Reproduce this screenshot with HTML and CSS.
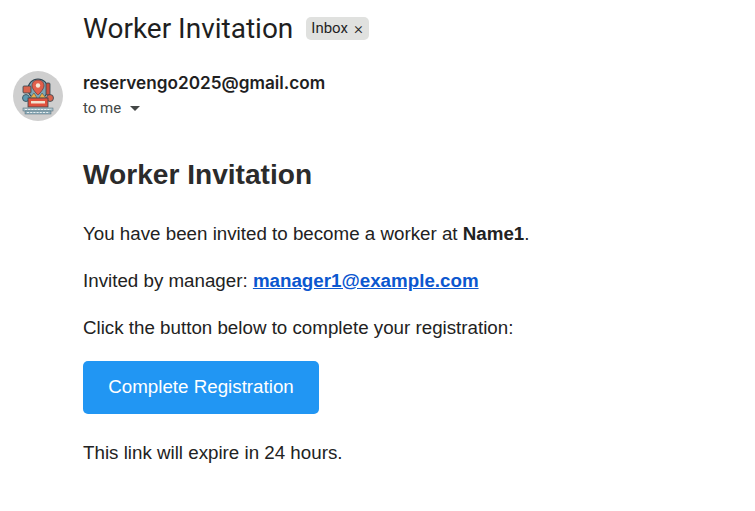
FILE: index.html
```html
<!DOCTYPE html>
<html lang="en">
<head>
<meta charset="utf-8">
<title>Worker Invitation</title>
<link rel="stylesheet" href="styles.css">
</head>
<body>
<div class="subject-row">
  <h1 class="subject">Worker Invitation</h1>
  <span class="chip">Inbox <span class="chip-x">×</span></span>
</div>
<div class="sender-row">
  <svg class="avatar" viewBox="0 0 50 50" width="50" height="50" aria-hidden="true">
    <circle cx="25" cy="25" r="25" fill="#cfcfcf"/>
    <circle cx="25" cy="18" r="10" fill="#7fa6b5" stroke="#2f4652" stroke-width="1.200"/>
    <rect x="10" y="15" width="8" height="7" rx="1" fill="#d9634c" stroke="#2f4652" stroke-width=".8"/>
    <rect x="33" y="12" width="4" height="12" rx="1" fill="#c9503f" stroke="#2f4652" stroke-width=".8"/>
    <circle cx="13" cy="27" r="3.500" fill="#5f9ab0" stroke="#2f4652" stroke-width=".8"/>
    <circle cx="37" cy="27" r="3.500" fill="#d9634c" stroke="#2f4652" stroke-width=".8"/>
    <path d="M25 9c-4 0-6 2.700-6 5.800 0 3.700 6 9.200 6 9.200s6-5.500 6-9.200c0-3.100-2-5.800-6-5.800z" fill="#e2604c" stroke="#6d3a38" stroke-width=".8"/>
    <circle cx="25" cy="14.500" r="2.200" fill="#f6ead8"/>
    <path d="M17 27l4-5 3 5zM26 27l3-5 4 5z" fill="#eeb04a" stroke="#39464f" stroke-width=".5"/>
    <rect x="15" y="27" width="20" height="9" fill="#e0513e" stroke="#39464f" stroke-width=".8"/>
    <rect x="18" y="30" width="14" height="2.500" fill="#f3e2cf"/>
    <rect x="10" y="37" width="30" height="3" fill="#a9c3cd" stroke="#4b6370" stroke-width=".5"/>
    <rect x="12" y="40" width="26" height="3" fill="#8fb0bd" stroke="#4b6370" stroke-width=".5"/>
    <path d="M12 38.500h26M14 41.500h22" stroke="#f0f4f5" stroke-width=".9" stroke-dasharray="2 1.200"/>
  </svg>
  <div class="sender-info">
    <div class="sender">reservengo2025@gmail.com</div>
    <div class="recipient">to me <svg class="caret" viewBox="0 0 10 5" width="10" height="5" aria-hidden="true"><path d="M0 0h10L5 5z" fill="#444746"/></svg></div>
  </div>
</div>
<main class="message">
  <h2 class="message-title">Worker Invitation</h2>
  <p class="line">You have been invited to become a worker at <strong>Name1</strong>.</p>
  <p class="line">Invited by manager: <a class="mail-link" href="#">manager1@example.com</a></p>
  <p class="line">Click the button below to complete your registration:</p>
  <a class="cta" href="#">Complete Registration</a>
  <p class="line">This link will expire in 24 hours.</p>
</main>
</body>
</html>
```

FILE: styles.css
```css
* { box-sizing: border-box; }
html, body { margin: 0; height: 100%; background: #fff; overflow: hidden; }
body { font-family: "Liberation Sans", Arial, sans-serif; color: #222; }
.subject-row { display: flex; align-items: center; gap: 13px; height: 56px; padding-left: 83px; }
.subject { margin: 2px 0 0; font: 400 28px/36px Roboto, sans-serif; color: #1f1f1f; }
.chip { display: flex; align-items: center; gap: 6px; height: 23px; padding: 0 6px 0 5px; border-radius: 5px; background: #e0e1df; font: 400 15px/23px Roboto, sans-serif; color: #1f1f1f; }
.chip-x { font-size: 17px; font-weight: 300; }
.sender-row { display: flex; gap: 20px; padding: 15px 0 0 13px; }
.avatar { flex: none; }
.sender-info { display: flex; flex-direction: column; gap: 3px; }
.sender { font: 600 17.200px/24px Inter, sans-serif; color: #1f1f1f; }
.recipient { display: flex; align-items: center; gap: 9px; font: 400 15px/20px Roboto, sans-serif; color: #444746; }
.message { padding: 38px 0 0 83px; font-size: 18.750px; line-height: 24px; }
.message-title { margin: 0 0 31px; font-size: 28.125px; line-height: 32px; font-weight: 700; color: #2b2b2b; }
.line { margin: 0 0 23px; }
.mail-link { color: #0b57cf; font-weight: 700; }
.cta { display: block; width: 236px; height: 53px; margin: -2px 0 27px; border-radius: 5px; background: #2196f3; color: #fff; font-size: 18.750px; line-height: 52px; text-align: center; text-decoration: none; }
```
